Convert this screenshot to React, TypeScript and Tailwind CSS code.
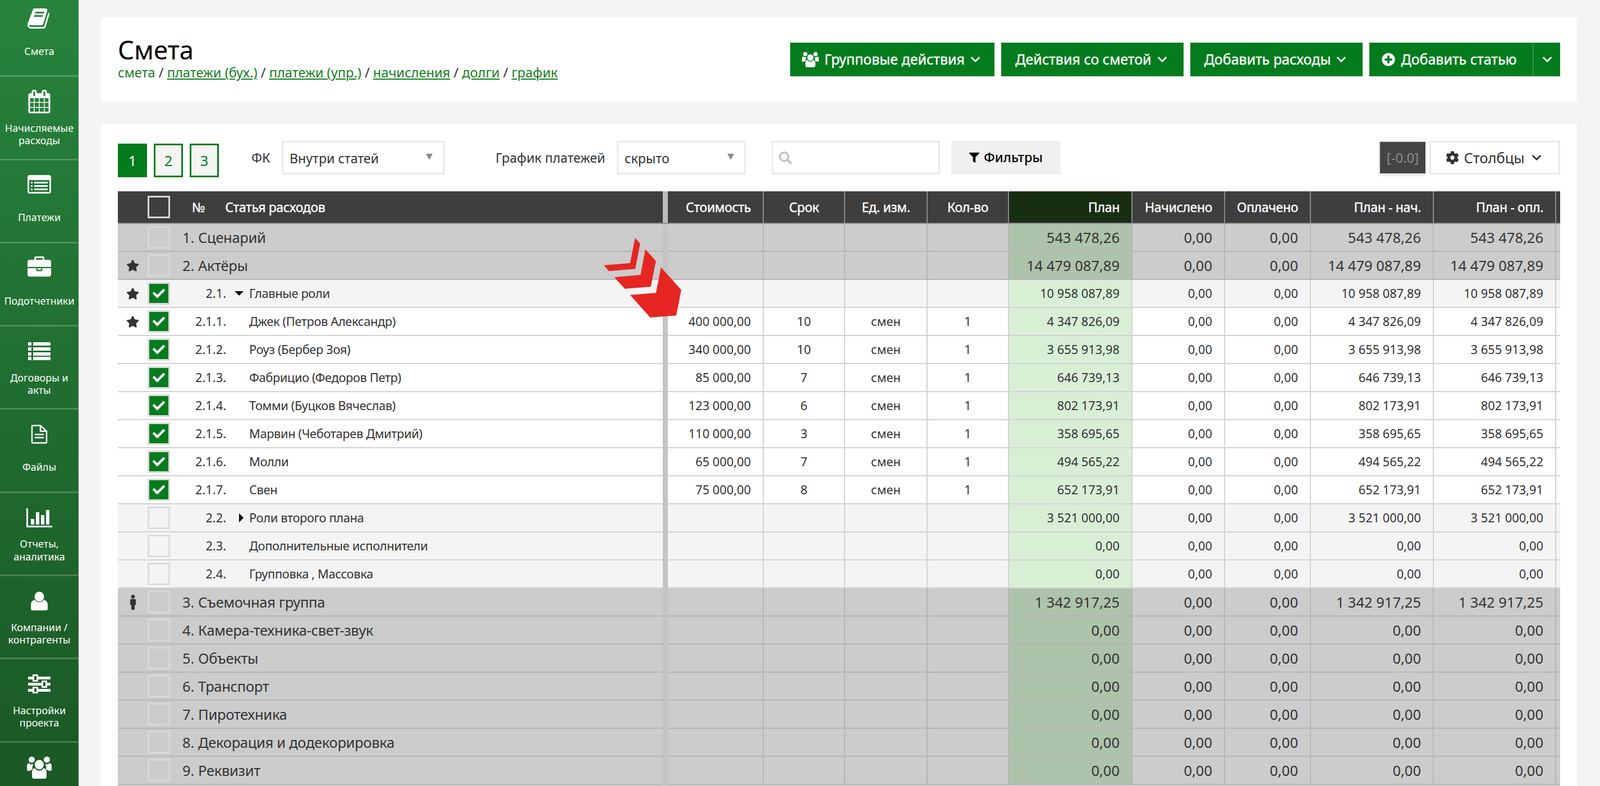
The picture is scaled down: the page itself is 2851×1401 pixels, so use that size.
import { FaCheck, FaCog, FaFilter, FaMale, FaPlusCircle, FaSearch, FaStar } from "react-icons/fa";
import { ChevronDown } from "lucide-react";

const P = {
  book: "M1639 478q40 57 18 129l-275 906q-19 64-76.5 107.5t-122.5 43.5h-923q-77 0-148.5-53.5t-99.5-131.5q-24-67-2-127 0-4 3-27t4-37q1-8-3-21.5t-3-19.5q2-11 8-21t16.5-23.5 16.5-23.5q23-38 45-91.5t30-91.5q3-10 .5-30t-.5-28q3-11 17-28t17-23q21-36 42-92t25-90q1-9-2.5-32t.5-28q4-13 22-30.5t22-22.5q19-26 42.5-84.5t27.5-96.5q1-8-3-25.5t-2-26.5q2-8 9-18t18-23 17-21q8-12 16.5-30.5t15-35 16-36 19.5-32 26.5-23.5 36-11.5 47.5 5.5l-1 3q38-9 51-9h761q74 0 114 56t18 130l-274 906q-36 119-71.5 153.5t-128.5 34.5h-869q-27 0-38 15-11 16-1 43 24 70 144 70h923q29 0 56-15.5t35-41.5l300-987q7-22 5-57 38 15 59 43zm-1064 2q-4 13 2 22.5t20 9.5h608q13 0 25.5-9.5t16.5-22.5l21-64q4-13-2-22.5t-20-9.5h-608q-13 0-25.5 9.5t-16.5 22.5zm-83 256q-4 13 2 22.5t20 9.5h608q13 0 25.5-9.5t16.5-22.5l21-64q4-13-2-22.5t-20-9.5h-608q-13 0-25.5 9.5t-16.5 22.5z",
  calendar: "M192 1664h288v-288h-288v288zm352 0h320v-288h-320v288zm-352-352h288v-320h-288v320zm352 0h320v-320h-320v320zm-352-384h288v-288h-288v288zm736 736h320v-288h-320v288zm-384-736h320v-288h-320v288zm768 736h288v-288h-288v288zm-384-352h320v-320h-320v320zm-352-864v-288q0-13-9.5-22.5t-22.5-9.5h-64q-13 0-22.5 9.5t-9.5 22.5v288q0 13 9.5 22.5t22.5 9.5h64q13 0 22.5-9.5t9.5-22.5zm736 864h288v-320h-288v320zm-384-384h320v-288h-320v288zm384 0h288v-288h-288v288zm32-480v-288q0-13-9.5-22.5t-22.5-9.5h-64q-13 0-22.5 9.5t-9.5 22.5v288q0 13 9.5 22.5t22.5 9.5h64q13 0 22.5-9.5t9.5-22.5zm384-64v1280q0 52-38 90t-90 38h-1408q-52 0-90-38t-38-90v-1280q0-52 38-90t90-38h128v-96q0-66 47-113t113-47h64q66 0 113 47t47 113v96h384v-96q0-66 47-113t113-47h64q66 0 113 47t47 113v96h128q52 0 90 38t38 90z",
  listAlt: "M384 1184v64q0 13-9.5 22.5t-22.5 9.5h-64q-13 0-22.5-9.5t-9.5-22.5v-64q0-13 9.5-22.5t22.5-9.5h64q13 0 22.5 9.5t9.5 22.5zm0-256v64q0 13-9.5 22.5t-22.5 9.5h-64q-13 0-22.5-9.5t-9.5-22.5v-64q0-13 9.5-22.5t22.5-9.5h64q13 0 22.5 9.5t9.5 22.5zm0-256v64q0 13-9.5 22.5t-22.5 9.5h-64q-13 0-22.5-9.5t-9.5-22.5v-64q0-13 9.5-22.5t22.5-9.5h64q13 0 22.5 9.5t9.5 22.5zm1152 512v64q0 13-9.5 22.5t-22.5 9.5h-960q-13 0-22.5-9.5t-9.5-22.5v-64q0-13 9.5-22.5t22.5-9.5h960q13 0 22.5 9.5t9.5 22.5zm0-256v64q0 13-9.5 22.5t-22.5 9.5h-960q-13 0-22.5-9.5t-9.5-22.5v-64q0-13 9.5-22.5t22.5-9.5h960q13 0 22.5 9.5t9.5 22.5zm0-256v64q0 13-9.5 22.5t-22.5 9.5h-960q-13 0-22.5-9.5t-9.5-22.5v-64q0-13 9.5-22.5t22.5-9.5h960q13 0 22.5 9.5t9.5 22.5zm128 704v-832q0-13-9.5-22.5t-22.5-9.5h-1472q-13 0-22.5 9.5t-9.5 22.5v832q0 13 9.5 22.5t22.5 9.5h1472q13 0 22.5-9.5t9.5-22.5zm128-1088v1088q0 66-47 113t-113 47h-1472q-66 0-113-47t-47-113v-1088q0-66 47-113t113-47h1472q66 0 113 47t47 113z",
  briefcase: "M640 256h512v-128h-512v128zm1152 640v480q0 66-47 113t-113 47h-1472q-66 0-113-47t-47-113v-480h672v160q0 26 19 45t45 19h320q26 0 45-19t19-45v-160h672zm-768 0v128h-256v-128h256zm768-480v384h-1792v-384q0-66 47-113t113-47h352v-160q0-40 28-68t68-28h576q40 0 68 28t28 68v160h352q66 0 113 47t47 113z",
};

const Fa4 = ({ d, className }: { d: string; className?: string }) => (
  <svg viewBox="0 0 1792 1792" className={className} fill="currentColor">
    <path d={d} />
  </svg>
);

const ListIcon = () => (
  <svg viewBox="0 0 40 32" className="w-[40px] h-[32px]" fill="currentColor">
    <path d="M0 0h6v6H0zM9 0h31v6H9zM0 9h6v6H0zM9 9h31v6H9zM0 18h6v6H0zM9 18h31v6H9zM0 26h6v6H0zM9 26h31v6H9z" />
  </svg>
);

const FileIcon = () => (
  <svg viewBox="0 0 30 34" className="w-[30px] h-[34px]" fill="none" stroke="currentColor" strokeWidth="2.4">
    <path d="M2 2.5c0-.6.5-1 1-1h14l11 10v20c0 .6-.5 1-1 1H3c-.5 0-1-.4-1-1z" />
    <path d="M17 2v9.500h11M7 17.500h16M7 23h16" />
  </svg>
);

const ChartIcon = () => (
  <svg viewBox="0 0 46 34" className="w-[46px] h-[34px]" fill="currentColor">
    <path d="M0 0h3v31h43v3H0zM8 19h6v10H8zM17 7h6v22h-6zM26 12h6v17h-6zM35 3h6v26h-6z" />
  </svg>
);

const UserIcon = () => (
  <svg viewBox="0 0 30 34" className="w-[30px] h-[34px]" fill="currentColor">
    <ellipse cx="15" cy="9.500" rx="8.500" ry="9" />
    <path d="M7 15c2 3 5 4.500 8 4.500s6-1.500 8-4.500c4 1 7 4 7 9v7c0 2-1 3-3 3H3c-2 0-3-1-3-3v-7c0-5 3-8 7-9z" />
  </svg>
);

const SlidersIcon = () => (
  <svg viewBox="0 0 40 34" className="w-[40px] h-[34px]" fill="currentColor">
    <path fillRule="evenodd" d="M0 4h8V0h10v4h22v5H18v4H8V9H0zM11 3v7h4V3z" />
    <path fillRule="evenodd" d="M0 15h24v-4h10v4h6v5h-6v4H24v-4H0zM27 14v7h4v-7z" />
    <path fillRule="evenodd" d="M0 26h8v-4h10v4h22v5H18v3H8v-3H0zM11 25v6h4v-6z" />
  </svg>
);

const UsersIcon = ({ className }: { className?: string }) => (
  <svg viewBox="0 0 44 40" className={className} fill="currentColor">
    <circle cx="8.500" cy="6" r="5.500" />
    <circle cx="35.500" cy="6" r="5.500" />
    <path d="M3 12c3 3 7 3 9 1-2 3-3 7-2 11-2 0-4 1-5 2H2c-1 0-2-1-2-2v-7c0-2 1-4 3-5zM41 12c-3 3-7 3-9 1 2 3 3 7 2 11 2 0 4 1 5 2h3c1 0 2-1 2-2v-7c0-2-1-4-3-5z" />
    <ellipse cx="22" cy="15" rx="8" ry="8.500" />
    <path d="M14 21c2 3 5 4.500 8 4.500s6-1.500 8-4.500c3 1 5 4 5 8v7c0 3-2 4-4 4H13c-2 0-4-1-4-4v-7c0-4 2-7 5-8z" />
  </svg>
);

// last item's label is below the fold in the picture
const navItems = [
  { label: "Смета", icon: <Fa4 d={P.book} className="w-[42px] h-[42px]" /> },
  { label: "Начисляемые расходы", icon: <Fa4 d={P.calendar} className="w-[42px] h-[42px]" /> },
  { label: "Платежи", icon: <Fa4 d={P.listAlt} className="w-[42px] h-[42px]" /> },
  { label: "Подотчетники", icon: <Fa4 d={P.briefcase} className="w-[42px] h-[42px]" /> },
  { label: "Договоры и акты", icon: <ListIcon /> },
  { label: "Файлы", icon: <FileIcon /> },
  { label: "Отчеты, аналитика", icon: <ChartIcon /> },
  { label: "Компании / контрагенты", icon: <UserIcon /> },
  { label: "Настройки проекта", icon: <SlidersIcon /> },
  { label: "", icon: <UsersIcon className="w-[44px] h-[40px]" /> },
];

const Sidebar = () => (
  <aside className="w-[140px] shrink-0 h-[1401px] overflow-hidden bg-gradient-to-b from-[#27833d] to-[#1a5825] text-white">
    <div className="-mt-[11px]">
      {navItems.map((item, i) => (
        <div key={i} className="h-[148.300px] border-b-[3px] border-white/20 flex flex-col items-center">
          <div className="h-[80px] shrink-0 flex items-center justify-center pt-[8px]">{item.icon}</div>
          <div className="h-[44px] flex items-center text-center text-[18px] leading-[22.500px] px-[8px]">{item.label}</div>
        </div>
      ))}
    </div>
  </aside>
);

const Link = ({ children }: { children: string }) => (
  <a className="text-[#14801f] underline">{children}</a>
);

const GreenBtn = ({ children, w }: { children: React.ReactNode; w: string }) => (
  <button className={`h-[60px] ${w} bg-[#047c1e] text-white text-[25px] [-webkit-text-stroke:0.4px] flex items-center justify-center gap-[6px]`}>
    {children}
  </button>
);

const Chev = () => <ChevronDown className="w-[26px] h-[26px]" strokeWidth={2.6} />;

const HeaderCard = () => (
  <section className="h-[150px] bg-white px-[30px] flex items-center justify-between">
    <div className="-mt-[7px]">
      <h1 className="text-[45.500px] leading-[50px] text-black">Смета</h1>
      <p className="mt-[3px] text-[23.600px] leading-[26px] text-[#333]">
        <span className="text-[#14801f]">смета</span> / <Link>платежи (бух.)</Link> / <Link>платежи (упр.)</Link> / <Link>начисления</Link> / <Link>долги</Link> / <Link>график</Link>
      </p>
    </div>
    <div className="flex gap-[12px]">
      <GreenBtn w="w-[364px]">
        <UsersIcon className="w-[30px] h-[28px] mr-[4px]" />
        Групповые действия
        <Chev />
      </GreenBtn>
      <GreenBtn w="w-[325px]">
        Действия со сметой
        <Chev />
      </GreenBtn>
      <GreenBtn w="w-[307px]">
        Добавить расходы
        <Chev />
      </GreenBtn>
      <div className="h-[60px] w-[340px] bg-[#047c1e] text-white text-[25px] [-webkit-text-stroke:0.4px] flex items-center">
        <div className="w-[291px] flex items-center justify-center gap-[10px] pr-[6px]">
          <FaPlusCircle className="w-[24px] h-[24px]" />
          Добавить статью
        </div>
        <div className="flex-1 h-full border-l-2 border-[#2f9347] flex items-center justify-center">
          <Chev />
        </div>
      </div>
    </div>
  </section>
);

const PageTab = ({ n, active }: { n: number; active?: boolean }) => (
  <div
    className={
      active
        ? "w-[52px] h-[60px] bg-[#047c1e] text-white text-[25.500px] flex items-center justify-center"
        : "w-[52px] h-[60px] bg-[#f4f4f4] border-[3px] border-[#047c1e] text-[#047c1e] text-[25.500px] flex items-center justify-center"
    }
  >
    {n}
  </div>
);

const SelectBox = ({ value, w }: { value: string; w: string }) => (
  <div className={`${w} h-[60px] border-[3px] border-[#eaeaf0] flex items-center justify-between pl-[11px] pr-[18px] text-[23.200px] text-[#333]`}>
    <span className="pt-[2px]">{value}</span>
    <span className="w-0 h-0 border-x-[6px] border-x-transparent border-t-[11px] border-t-[#8a8a8a] -mt-[4px]" />
  </div>
);

const Toolbar = () => (
  <div className="flex items-center h-[60px] text-[23.200px] text-[#333]">
    <div className="flex gap-[12px] -mb-[5px] mt-[5px]">
      <PageTab n={1} active />
      <PageTab n={2} />
      <PageTab n={3} />
    </div>
    <span className="ml-[58px] w-[54px]">ФК</span>
    <SelectBox value="Внутри статей" w="w-[290px]" />
    <span className="ml-[91px] w-[216px]">График платежей</span>
    <SelectBox value="скрыто" w="w-[230px]" />
    <div className="ml-[46px] w-[300px] h-[60px] border-[3px] border-[#eaeaf0] flex items-center pl-[10px]">
      <FaSearch className="w-[23px] h-[23px] text-[#c4c4c4]" />
    </div>
    <button className="ml-[20px] w-[195px] h-[60px] bg-[#f0f0f0] text-black text-[23.600px] font-medium flex items-center justify-center gap-[8px]">
      <FaFilter className="w-[18px] h-[20px]" />
      Фильтры
    </button>
    <div className="ml-auto w-[83px] h-[60px] bg-[#444] border-[2px] border-[#e4e4e4] border-r-0 text-[#8c8c8c] text-[24px] flex items-center justify-center shadow-[0_3px_3px_rgba(0,0,0,.08)]">
      [-0.0]
    </div>
    <button className="ml-[7px] w-[233px] h-[60px] bg-white border-[3px] border-[#e8e8e8] text-[#333] text-[25.500px] flex items-center justify-center gap-[8px]">
      <FaCog className="w-[24px] h-[24px]" />
      Столбцы
      <Chev />
    </button>
  </div>
);

type Kind = "group" | "sub" | "leaf";

interface RowData {
  kind: Kind;
  num: string;
  name?: string;
  cost?: string;
  term?: string;
  plan: string;
  mark?: "star" | "man";
  checked?: boolean;
  caret?: "down" | "right";
}

const rows: RowData[] = [
  { kind: "group", num: "1.", name: "Сценарий", plan: "543 478,26" },
  { kind: "group", num: "2.", name: "Актёры", plan: "14 479 087,89", mark: "star" },
  { kind: "sub", num: "2.1.", name: "Главные роли", plan: "10 958 087,89", mark: "star", checked: true, caret: "down" },
  { kind: "leaf", num: "2.1.1.", name: "Джек (Петров Александр)", cost: "400 000,00", term: "10", plan: "4 347 826,09", mark: "star", checked: true },
  { kind: "leaf", num: "2.1.2.", name: "Роуз (Бербер Зоя)", cost: "340 000,00", term: "10", plan: "3 655 913,98", checked: true },
  { kind: "leaf", num: "2.1.3.", name: "Фабрицио (Федоров Петр)", cost: "85 000,00", term: "7", plan: "646 739,13", checked: true },
  { kind: "leaf", num: "2.1.4.", name: "Томми (Буцков Вячеслав)", cost: "123 000,00", term: "6", plan: "802 173,91", checked: true },
  { kind: "leaf", num: "2.1.5.", name: "Марвин (Чеботарев Дмитрий)", cost: "110 000,00", term: "3", plan: "358 695,65", checked: true },
  { kind: "leaf", num: "2.1.6.", name: "Молли", cost: "65 000,00", term: "7", plan: "494 565,22", checked: true },
  { kind: "leaf", num: "2.1.7.", name: "Свен", cost: "75 000,00", term: "8", plan: "652 173,91", checked: true },
  { kind: "sub", num: "2.2.", name: "Роли второго плана", plan: "3 521 000,00", caret: "right" },
  { kind: "sub", num: "2.3.", name: "Дополнительные исполнители", plan: "0,00" },
  { kind: "sub", num: "2.4.", name: "Групповка , Массовка", plan: "0,00" },
  { kind: "group", num: "3.", name: "Съемочная группа", plan: "1 342 917,25", mark: "man" },
  { kind: "group", num: "4.", name: "Камера-техника-свет-звук", plan: "0,00" },
  { kind: "group", num: "5.", name: "Объекты", plan: "0,00" },
  { kind: "group", num: "6.", name: "Транспорт", plan: "0,00" },
  { kind: "group", num: "7.", name: "Пиротехника", plan: "0,00" },
  { kind: "group", num: "8.", name: "Декорация и додекорировка", plan: "0,00" },
  { kind: "group", num: "9.", name: "Реквизит", plan: "0,00" },
];

const rowBg: Record<Kind, string> = {
  group: "bg-[#cccccc] text-[25.500px] border-[#b5b5b5]",
  sub: "bg-[#f4f4f4] text-[21.800px] border-[#d2d2d2]",
  leaf: "bg-white text-[21.800px] border-[#d2d2d2]",
};

const planBg: Record<Kind, string> = {
  group: "bg-[#aec3ab]",
  sub: "bg-[#d8efd6]",
  leaf: "bg-[#d8efd6]",
};

const cellBase = "h-full border-r-[2px] border-inherit flex items-center";

const Row = ({ r }: { r: RowData }) => {
  const group = r.kind === "group";
  return (
    <div className={`flex h-[50px] border-b-[2px] text-[#333] ${rowBg[r.kind]}`}>
      <div className="w-[971px] h-full flex items-center">
        <div className="w-[53px] flex justify-center">
          {r.mark === "star" && <FaStar className="w-[23px] h-[23px] text-[#333]" />}
          {r.mark === "man" && <FaMale className="w-[24px] h-[27px] text-[#333]" />}
        </div>
        <div
          className={
            r.checked
              ? "w-[40px] h-[40px] bg-[#047c1e] border-[3px] border-[#dcdcdc] flex items-center justify-center"
              : group
                ? "w-[40px] h-[40px] border-[3px] border-[#d8d8d8]"
                : "w-[40px] h-[40px] border-[3px] border-[#dcdcdc]"
          }
        >
          {r.checked && <FaCheck className="w-[24px] h-[22px] text-white" />}
        </div>
        {group ? (
          <span className="ml-[22px]">
            {r.num} <span className="tracking-[-0.012em]">{r.name}</span>
          </span>
        ) : (
          <div className="flex items-center">
            <span className="w-[100px] text-right">{r.num}</span>
            <span className="w-[41px] flex justify-end pr-[10px]">
              {r.caret === "down" && <span className="w-0 h-0 border-x-[8px] border-x-transparent border-t-[8px] border-t-black" />}
              {r.caret === "right" && <span className="w-0 h-0 border-y-[8px] border-y-transparent border-l-[8px] border-l-black" />}
            </span>
            <span className="tracking-[-0.016em]">{r.name}</span>
          </div>
        )}
      </div>
      <div className="w-[9px] h-[calc(100%+2px)] bg-[#c4c4c4]" />
      <div className={`${cellBase} w-[171px] justify-end pr-[21px]`}>{r.cost}</div>
      <div className={`${cellBase} w-[145px] justify-center`}>{r.term}</div>
      <div className={`${cellBase} w-[147px] justify-center`}>{r.cost ? "смен" : ""}</div>
      <div className={`${cellBase} w-[145px] justify-center`}>{r.cost ? "1" : ""}</div>
      <div className={`${cellBase} ${planBg[r.kind]} w-[220px] justify-end pr-[21px]`}>{r.plan}</div>
      <div className={`${cellBase} w-[165px] justify-end pr-[21px]`}>0,00</div>
      <div className={`${cellBase} w-[153px] justify-end pr-[21px]`}>0,00</div>
      <div className={`${cellBase} w-[219px] justify-end pr-[21px]`}>{r.plan}</div>
      <div className={`${cellBase} w-[218px] justify-end pr-[21px]`}>{r.plan}</div>
      <div className="w-[7px]" />
    </div>
  );
};

const headCell = "h-full border-r-2 border-[#8a8a8a] flex items-center";

const TableHead = () => (
  <div className="flex h-[58px] bg-[#3e3e3e] border-b-[2px] border-[#8a8a8a] text-white text-[23px] tracking-[-0.015em] [-webkit-text-stroke:0.4px]">
    <div className="w-[971px] h-full flex items-center">
      <div className="w-[53px]" />
      <div className="w-[40px] h-[40px] border-[3px] border-[#d8d8d8]" />
      <span className="ml-[39px]">№</span>
      <span className="ml-[36px]">Статья расходов</span>
    </div>
    <div className="w-[9px] h-full bg-[#bdbdbd]" />
    <div className={`${headCell} w-[171px] justify-end pr-[21px]`}>Стоимость</div>
    <div className={`${headCell} w-[145px] justify-center`}>Срок</div>
    <div className={`${headCell} w-[147px] justify-center`}>Ед. изм.</div>
    <div className={`${headCell} w-[145px] justify-center`}>Кол-во</div>
    <div className={`${headCell} w-[220px] justify-end pr-[21px] bg-[#182e13]`}>План</div>
    <div className={`${headCell} w-[165px] justify-end pr-[21px]`}>Начислено</div>
    <div className={`${headCell} w-[153px] justify-end pr-[21px]`}>Оплачено</div>
    <div className={`${headCell} w-[219px] justify-end pr-[21px]`}>План - нач.</div>
    <div className={`${headCell} w-[218px] justify-end pr-[21px]`}>План - опл.</div>
    <div className="w-[7px]" />
  </div>
);

const Arrows = () => (
  <svg className="absolute left-[896px] top-[203px] w-[150px] h-[150px]" viewBox="1076 424 150 150" fill="#e62623">
    <polygon points="1131.700,424 1140.700,434.300 1132,479.300 1085,483.300 1076,472.700 1122.700,469" />
    <polygon points="1150,444.300 1168.700,465.300 1159.700,511 1113.300,514.700 1094.700,494 1141.300,490" />
    <polygon points="1177.700,476.300 1214,516.700 1205,562.300 1158.700,566 1122.700,525.700 1169,522" />
  </svg>
);

export default function App() {
  return (
    <div className="flex h-[1401px] overflow-hidden bg-[#f4f4f4] font-['Roboto','Liberation_Sans',sans-serif]">
      <Sidebar />
      <main className="flex-1 pl-[40px] pr-[42px] pt-[31px]">
        <HeaderCard />
        <section className="relative mt-[40px] bg-white px-[30px] pt-[30px] h-[1200px]">
          <Toolbar />
          <div className="mt-[30px]">
            <TableHead />
            {rows.map((r) => (
              <Row key={r.num} r={r} />
            ))}
            <div className="h-[50px] bg-[#cccccc]" />
          </div>
          <Arrows />
        </section>
      </main>
    </div>
  );
}
